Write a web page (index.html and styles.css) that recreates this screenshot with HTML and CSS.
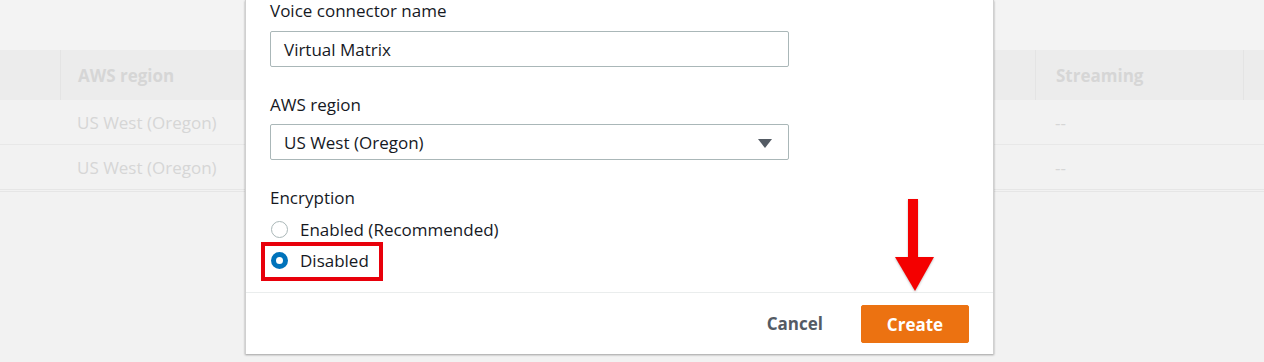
FILE: index.html
```html
<!DOCTYPE html>
<html>
<head>
<meta charset="utf-8">
<link rel="stylesheet" href="styles.css">
</head>
<body>
<div class="page">
  <div class="top-space"></div>
  <div class="table">
    <div class="row head">
      <div class="cell c1"></div>
      <div class="cell c2">AWS region</div>
      <div class="cell c3">Streaming</div>
      <div class="cell c4"></div>
    </div>
    <div class="row">
      <div class="cell c1"></div>
      <div class="cell c2">US West (Oregon)</div>
      <div class="cell c3">--</div>
      <div class="cell c4"></div>
    </div>
    <div class="row last">
      <div class="cell c1"></div>
      <div class="cell c2">US West (Oregon)</div>
      <div class="cell c3">--</div>
      <div class="cell c4"></div>
    </div>
  </div>
</div>

<div class="modal">
  <div class="modal-body">
    <div class="field">
      <div class="label">Voice connector name</div>
      <div class="input">Virtual Matrix</div>
    </div>
    <div class="field">
      <div class="label">AWS region</div>
      <div class="input select">
        <span>US West (Oregon)</span>
        <svg class="caret" width="14" height="10" viewBox="0 0 14 10"><polygon points="0,1 14,1 7,10" fill="#545b64"/></svg>
      </div>
    </div>
    <div class="field">
      <div class="label">Encryption</div>
      <div class="radios">
        <div class="radio-row"><span class="radio"></span><span>Enabled (Recommended)</span></div>
        <div class="radio-row"><span class="radio checked"></span><span>Disabled</span></div>
      </div>
    </div>
  </div>
  <div class="modal-footer">
    <button class="btn-link">Cancel</button>
    <button class="btn-primary">Create</button>
  </div>
</div>

<div class="highlight"></div>
<svg class="arrow" width="45" height="100" viewBox="0 0 45 100">
  <rect x="15" y="2" width="10" height="60" fill="#f40000"/>
  <polygon points="2,60 41,60 22,94" fill="#f40000"/>
</svg>
</body>
</html>
```

FILE: styles.css
```css
html, body {
  margin: 0;
  padding: 0;
}
body {
  width: 1264px;
  height: 362px;
  overflow: hidden;
  background: #f2f2f2;
  font-family: "Open Sans", "Noto Sans", sans-serif;
  position: relative;
}
.page {
  display: flex;
  flex-direction: column;
}
.top-space {
  height: 50px;
  background: #f3f3f3;
}
.table {
  display: flex;
  flex-direction: column;
}
.row {
  display: grid;
  grid-template-columns: 60px 975px 208px 1fr;
  height: 44px;
  border-bottom: 1px solid #e8e8e8;
  color: #d6d6d6;
  font-size: 17px;
}
.row.head {
  height: 50px;
  background: #ececec;
  border-bottom: none;
  font-weight: 700;
}
.row.last {
  border-bottom: 3px double #e6e6e6;
}
.cell {
  display: flex;
  align-items: center;
}
.row.head .cell {
  border-left: 1px solid #e4e4e4;
}
.row.head .c1 {
  border-left: none;
}
.c2 {
  padding-left: 17px;
}
.c3 {
  padding-left: 20px;
}

.modal {
  position: absolute;
  left: 245px;
  top: 0;
  width: 749px;
  height: 354px;
  background: #fff;
  border-left: 1px solid #d0d0d0;
  border-right: 1px solid #d0d0d0;
  box-shadow: 0 1px 2px rgba(0,0,0,0.35);
  display: flex;
  flex-direction: column;
  color: #16191f;
  box-sizing: border-box;
}
.modal-body {
  padding: 0 25px 0 24px;
  display: flex;
  flex-direction: column;
  height: 293px;
  border-bottom: 1px solid #eaeded;
  box-sizing: border-box;
}
.field {
  display: flex;
  flex-direction: column;
}
.label {
  font-size: 17px;
  line-height: 22px;
  height: 22px;
  margin-bottom: 9px;
}
.field + .field {
  margin-top: 27px;
}
.field + .field .label {
  margin-bottom: 8px;
}
.input {
  width: 519px;
  height: 36px;
  box-sizing: border-box;
  border: 1px solid #aab7b8;
  border-radius: 2px;
  padding: 0 13px;
  display: flex;
  align-items: center;
  font-size: 17px;
}
.select {
  justify-content: space-between;
  padding-right: 16px;
}
.caret {
  display: block;
  margin-top: 1px;
}
.radios {
  display: flex;
  flex-direction: column;
  margin-top: -3px;
}
.radio-row {
  height: 31px;
  display: flex;
  align-items: center;
  gap: 12px;
  font-size: 17px;
}
.radio {
  width: 17px;
  height: 17px;
  box-sizing: border-box;
  border: 1px solid #aab7b8;
  border-radius: 50%;
  margin-left: 1px;
  background: #fff;
}
.radio.checked {
  border: 5px solid #0073bb;
  background: #fff;
}
.modal-footer {
  flex: 1;
  display: flex;
  justify-content: flex-end;
  align-items: center;
  padding: 0 24px 0 0;
  gap: 22px;
}
.btn-link {
  background: none;
  border: none;
  font-family: inherit;
  font-weight: 700;
  font-size: 17px;
  color: #545b64;
  padding: 0 16px;
  height: 38px;
}
.btn-primary {
  background: #ec7211;
  border: 1px solid #ec7211;
  border-radius: 2px;
  color: #fff;
  font-family: inherit;
  font-weight: 700;
  font-size: 17px;
  width: 108px;
  height: 38px;
  padding: 0;
  margin-top: 1px;
}

.highlight {
  position: absolute;
  left: 261px;
  top: 242px;
  width: 122px;
  height: 39px;
  box-sizing: border-box;
  border: 4px solid #e8000b;
}
.arrow {
  position: absolute;
  left: 893px;
  top: 197px;
  filter: drop-shadow(0 1px 1px rgba(0,0,0,0.25));
}
```
